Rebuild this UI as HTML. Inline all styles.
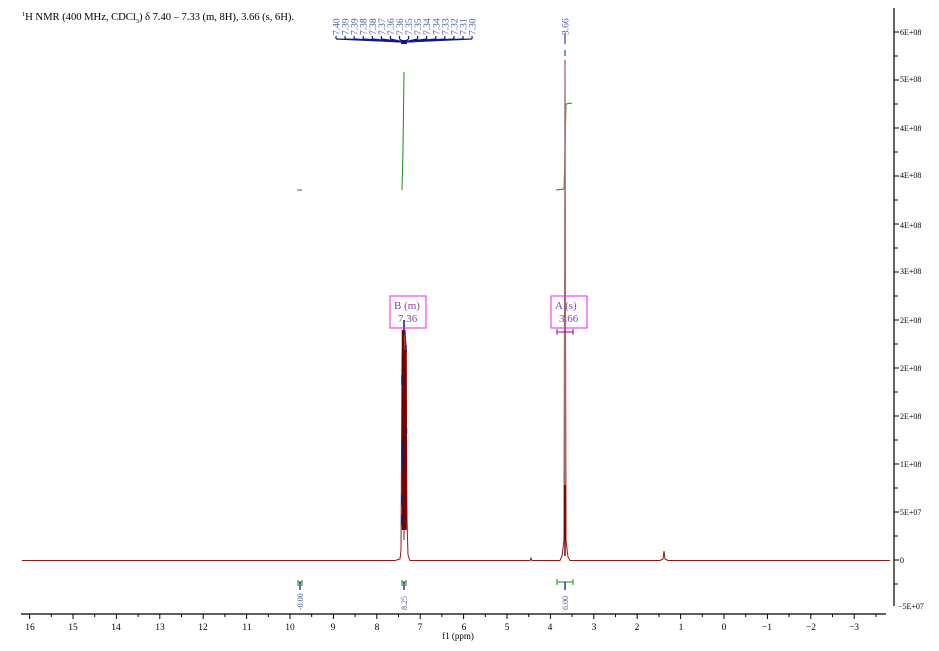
<!DOCTYPE html>
<html><head><meta charset="utf-8"><style>
html,body{margin:0;padding:0;background:#fff;width:939px;height:651px;overflow:hidden}
svg{display:block}
text{font-family:"Liberation Serif",serif}
</style></head><body>
<svg width="939" height="651" viewBox="0 0 939 651" xmlns="http://www.w3.org/2000/svg">
<text x="22" y="20" font-size="10.7" textLength="272"><tspan font-size="6.5" dy="-4">1</tspan><tspan dy="4">H NMR (400 MHz, CDCl</tspan><tspan font-size="6.5" dy="3">3</tspan><tspan dy="-3">) δ 7.40 – 7.33 (m, 8H), 3.66 (s, 6H).</tspan></text>

<!-- peak labels -->
<g font-size="9.5" fill="#4a5aa0" font-family="Liberation Mono,monospace">
<text transform="translate(339.5,35) rotate(-90)">7.40</text>
<text transform="translate(348.6,35) rotate(-90)">7.39</text>
<text transform="translate(357.6,35) rotate(-90)">7.39</text>
<text transform="translate(366.7,35) rotate(-90)">7.38</text>
<text transform="translate(375.8,35) rotate(-90)">7.38</text>
<text transform="translate(384.9,35) rotate(-90)">7.37</text>
<text transform="translate(393.9,35) rotate(-90)">7.36</text>
<text transform="translate(403,35) rotate(-90)">7.36</text>
<text transform="translate(412.1,35) rotate(-90)">7.35</text>
<text transform="translate(421.1,35) rotate(-90)">7.35</text>
<text transform="translate(430.2,35) rotate(-90)">7.34</text>
<text transform="translate(439.3,35) rotate(-90)">7.34</text>
<text transform="translate(448.3,35) rotate(-90)">7.33</text>
<text transform="translate(457.4,35) rotate(-90)">7.32</text>
<text transform="translate(466.5,35) rotate(-90)">7.31</text>
<text transform="translate(475.5,35) rotate(-90)">7.30</text>
<text transform="translate(568.5,35) rotate(-90)">3.66</text>
</g>
<g stroke="#101a80" stroke-width="1.2" fill="none" id="fan"></g>
<rect x="401" y="40" width="6" height="4" fill="#101a80"/>
<line x1="565" y1="33" x2="565" y2="44" stroke="#101a80"/>
<line x1="565" y1="50" x2="565" y2="56" stroke="#101a80"/>

<!-- integral curves -->
<g stroke="#1a8a1a" stroke-width="1" fill="none">
<path d="M297,190 L302,190"/>
<path d="M402,190 L403,150 L404,72"/>
<path d="M556,190 L564,189 L565,150 L566,104 L572,103"/>
</g>

<!-- spectrum -->
<g fill="none">
<path d="M22,560.5 L395,560.5 L400,559 L401,550 L402,360 L403,330 L404,540 L405,330 L406,345 L407,520 L408,555 L410,560.5 L530,560.5 L531,558 L532,560.5 L560,560.5 L562,556 L564,540 L565,60 L566,540 L568,557 L570,560.5 L660,560.5 L663,559 L664,551 L665,559 L668,560.5 L890,560.5" stroke="#8b1a1a" stroke-width="1"/>
<line x1="565" y1="62" x2="565" y2="485" stroke="#b08080" stroke-width="1.5"/>
<line x1="565" y1="485" x2="565" y2="556" stroke="#7a0000" stroke-width="1.5"/>
<path d="M403,330 L403,530 M405.5,350 L405.5,530" stroke="#7a0000" stroke-width="2.5"/>
<path d="M404,320 L404,335 M406,345 L406,352 M402,375 L402,385 M403,440 L403,470 M402,495 L402,505 M402,515 L402,525 M406.5,428 L406.5,434" stroke="#101a80" stroke-width="1.5"/>
</g>

<!-- multiplet boxes -->
<g fill="none" stroke="#ee22ee" stroke-width="1">
<rect x="390" y="296" width="36" height="32"/>
<rect x="551" y="296" width="36" height="32"/>
</g>
<g font-family="Liberation Mono,monospace" font-size="11" fill="#8844aa">
<text x="394" y="309">B (m)</text><text x="398" y="322">7.36</text>
<text x="555" y="309">A (s)</text><text x="559" y="322">3.66</text>
</g>
<g stroke="#7a1a6a" stroke-width="1" fill="none">
<path d="M557,332 H573 M557,329 V335 M573,329 V335"/>
<path d="M403,330 H405"/>
</g>

<!-- integration marks -->
<g stroke="#1a8a1a" stroke-width="1" fill="none">
<path d="M298,582 H302 M298,580 V586 M302,580 V586"/>
<path d="M402,582 H406 M402,580 V586 M406,580 V586"/>
<path d="M557,582 H573 M557,579 V585 M573,579 V585"/>
</g>
<g stroke="#101a80" stroke-width="1.3"><line x1="300" y1="582" x2="300" y2="590"/><line x1="404" y1="582" x2="404" y2="590"/><line x1="565" y1="582" x2="565" y2="590"/></g>
<g font-size="8" fill="#4a5aa0" font-family="Liberation Mono,monospace">
<text transform="translate(303,610) rotate(-90)">-0.00</text>
<text transform="translate(407,610) rotate(-90)">8.25</text>
<text transform="translate(568,610) rotate(-90)">6.00</text>
</g>

<!-- x axis -->
<line x1="21" y1="614" x2="886" y2="614" stroke="#000" stroke-width="1.2"/>
<g id="xt" stroke="#000" stroke-width="1"></g>
<g font-size="9.5" fill="#000" text-anchor="middle">
<text x="30" y="630">16</text><text x="73" y="630">15</text><text x="116" y="630">14</text><text x="160" y="630">13</text><text x="203" y="630">12</text><text x="247" y="630">11</text><text x="290" y="630">10</text><text x="333" y="630">9</text><text x="377" y="630">8</text><text x="420" y="630">7</text><text x="464" y="630">6</text><text x="507" y="630">5</text><text x="550" y="630">4</text><text x="594" y="630">3</text><text x="637" y="630">2</text><text x="681" y="630">1</text><text x="724" y="630">0</text><text x="767" y="630">−1</text><text x="811" y="630">−2</text><text x="854" y="630">−3</text>
<text x="458" y="639" font-size="9" font-family="Liberation Mono,monospace">f1 (ppm)</text>
</g>

<!-- y axis -->
<line x1="894" y1="8" x2="894" y2="606" stroke="#000" stroke-width="1.2"/>
<g id="yt" stroke="#000" stroke-width="1"></g>
<g font-size="8" fill="#000">
<text x="900" y="35">6E+08</text><text x="900" y="82">5E+08</text><text x="900" y="131">4E+08</text><text x="900" y="178">4E+08</text><text x="900" y="228">4E+08</text><text x="900" y="274">3E+08</text><text x="900" y="323">2E+08</text><text x="900" y="371">2E+08</text><text x="900" y="419">2E+08</text><text x="900" y="467">1E+08</text><text x="900" y="515">5E+07</text><text x="900" y="563">0</text><text x="898" y="609">−5E+07</text>
</g>
<script>
var ns="http://www.w3.org/2000/svg";
function L(g,x1,y1,x2,y2){var l=document.createElementNS(ns,"line");l.setAttribute("x1",x1);l.setAttribute("y1",y1);l.setAttribute("x2",x2);l.setAttribute("y2",y2);g.appendChild(l);}
var xt=document.getElementById("xt");
for(var p=16;p>=-3.5;p-=0.5){var x=724-43.4*p;L(xt,x,614,x,p%1==0?619:617);}
var yt=document.getElementById("yt");
for(var i=0;i<=24;i++){var y=32+i*24;if(y>606)break;L(yt,894,y,i%2==0?899:898,y);}
var fan=document.getElementById("fan");
for(var k=0;k<16;k++){var x=336+k*9.07;L(fan,x,36,x,39);L(fan,x,39,404,42);}
</script>
</svg>
</body></html>
